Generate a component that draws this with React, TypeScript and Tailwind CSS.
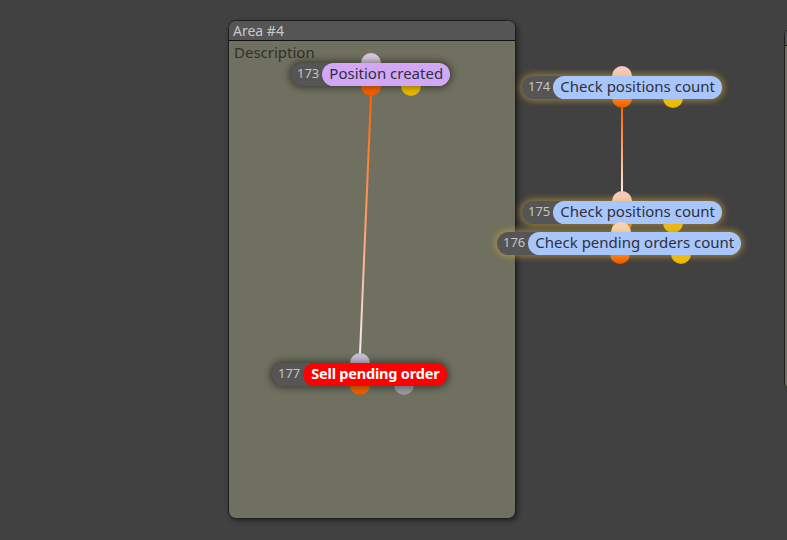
import React from "react";

type Pin = { x: number; y: number; kind: "in" | "orange" | "yellow" | "gray"; tint?: string };

const pinBg: Record<string, string> = {
  orange: "linear-gradient(180deg,#ff9a3a 0%,#ff6a00 60%,#f05a00 100%)",
  yellow: "linear-gradient(180deg,#ffd84a 0%,#f5c400 60%,#e8b400 100%)",
  gray: "linear-gradient(180deg,#b4b4bc 0%,#98989f 100%)",
};

function PinDot({ p }: { p: Pin }) {
  const bg = p.kind === "in" ? p.tint! : pinBg[p.kind];
  return (
    <div
      className="absolute w-[20px] h-[20px] rounded-full"
      style={{ left: p.x - 10, top: p.y - 10, background: bg }}
    />
  );
}

type NodeProps = {
  id: string;
  label: string;
  left: number;
  top: number;
  labelBg: string;
  glow: boolean;
  bold?: boolean;
  pins: Pin[];
};

function Node({ id, label, left, top, labelBg, glow, bold, pins }: NodeProps) {
  return (
    <>
      {pins.map((p, i) => (
        <PinDot key={i} p={p} />
      ))}
      <div
        className={
          "absolute flex items-center h-[23px] rounded-full bg-[#555555] " +
          (glow
            ? "shadow-[0_0_6px_2px_rgba(215,170,60,0.55)]"
            : "shadow-[0_0_7px_2px_rgba(0,0,0,0.45)]")
        }
        style={{ left, top }}
      >
        <span className="pl-[6px] pr-[3px] pb-[2px] text-[13px] leading-none text-[#c4c4c4] font-['Noto_Sans',sans-serif]">
          {id}
        </span>
        <span
          className={
            "h-[23px] flex items-center rounded-full pb-[2px] leading-none font-['Noto_Sans',sans-serif] " +
            (bold
              ? "text-white font-bold text-[14.5px] px-[8px] tracking-[-0.2px]"
              : "text-[#2e3040] text-[15px] px-[7px]")
          }
          style={{ background: labelBg }}
        >
          {label}
        </span>
      </div>
    </>
  );
}

const inPurple = "linear-gradient(180deg,#d8c8dc 0%,#ece4ee 100%)";
const inPink = "linear-gradient(180deg,#f8c4bc 0%,#fde8e4 100%)";
const inPeach = "linear-gradient(180deg,#f8d2b4 0%,#fde6d6 100%)";
const inLav = "linear-gradient(180deg,#c8bcd4 0%,#e4dcea 100%)";

export default function App() {
  return (
    <div className="relative w-[787px] h-[540px] overflow-hidden bg-[#414141] font-['Noto_Sans',sans-serif]">
      {/* Area #4 */}
      <div className="absolute left-[228px] top-[20px] w-[288px] h-[499px] rounded-[8px] overflow-hidden flex flex-col bg-[#6f705f] border border-[#1e1e1e] shadow-[2px_2px_5px_rgba(0,0,0,0.45)]">
        <div className="h-[20px] shrink-0 bg-[#555555] border-b border-[#111] flex items-center px-[4px] text-[14px] leading-none text-[#c8c8c8]">
          Area #4
        </div>
        <div className="px-[5px] pt-[1px] text-[15px] leading-[20px] text-[#2f3029]">Description</div>
      </div>

      {/* Right area (partially visible) */}
      <div className="absolute left-[784px] top-[29px] w-[300px] h-[360px] rounded-[6px] overflow-hidden flex flex-col bg-[#6f705f] border border-[#1e1e1e]">
        <div className="h-[16px] shrink-0 bg-[#555555] border-b border-[#111]" />
      </div>

      {/* connections */}
      <svg className="absolute left-0 top-0" width={787} height={540}>
        <defs>
          <linearGradient id="g1" gradientUnits="userSpaceOnUse" x1="371" y1="96" x2="360" y2="353">
            <stop offset="0" stopColor="#ff6400" />
            <stop offset="0.5" stopColor="#ffa070" />
            <stop offset="1" stopColor="#f4eaf4" />
          </linearGradient>
          <linearGradient id="g2" gradientUnits="userSpaceOnUse" x1="622" y1="108" x2="622" y2="191">
            <stop offset="0" stopColor="#ff6400" />
            <stop offset="0.5" stopColor="#ffa070" />
            <stop offset="1" stopColor="#fbeeee" />
          </linearGradient>
        </defs>
        <line x1="371" y1="96" x2="360" y2="354" stroke="url(#g1)" strokeWidth="2" />
        <line x1="622" y1="108" x2="622" y2="192" stroke="url(#g2)" strokeWidth="2" />
      </svg>

      <Node
        id="173"
        label="Position created"
        left={291}
        top={63}
        labelBg="#d2a8f6"
        glow={false}
        pins={[
          { x: 371, y: 63, kind: "in", tint: inPurple },
          { x: 371, y: 86, kind: "orange" },
          { x: 411, y: 86, kind: "yellow" },
        ]}
      />
      <Node
        id="174"
        label="Check positions count"
        left={522}
        top={76}
        labelBg="#a8c6fa"
        glow
        pins={[
          { x: 622, y: 76, kind: "in", tint: inPink },
          { x: 622, y: 98, kind: "orange" },
          { x: 673, y: 98, kind: "yellow" },
        ]}
      />
      <Node
        id="175"
        label="Check positions count"
        left={522}
        top={201}
        labelBg="#a8c6fa"
        glow
        pins={[
          { x: 622, y: 201, kind: "in", tint: inPink },
          { x: 622, y: 223, kind: "orange" },
          { x: 673, y: 223, kind: "yellow" },
        ]}
      />
      <Node
        id="176"
        label="Check pending orders count"
        left={497}
        top={232}
        labelBg="#a8c6fa"
        glow
        pins={[
          { x: 621, y: 232, kind: "in", tint: inPeach },
          { x: 620, y: 254, kind: "orange" },
          { x: 681, y: 254, kind: "yellow" },
        ]}
      />
      <Node
        id="177"
        label="Sell pending order"
        left={272}
        top={363}
        labelBg="#ff0000"
        glow={false}
        bold
        pins={[
          { x: 360, y: 363, kind: "in", tint: inLav },
          { x: 360, y: 385, kind: "orange" },
          { x: 404, y: 385, kind: "gray" },
        ]}
      />
    </div>
  );
}
